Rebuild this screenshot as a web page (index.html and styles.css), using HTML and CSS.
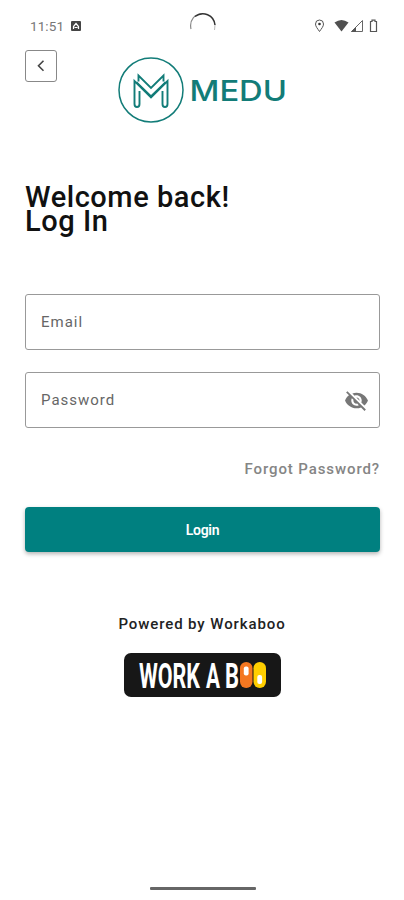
FILE: index.html
```html
<!DOCTYPE html>
<html lang="en">
<head>
  <meta charset="UTF-8" />
  <meta name="viewport" content="width=device-width, initial-scale=1.0" />
  <title>Medu - Log In</title>
  <link rel="stylesheet" href="styles.css">
</head>
<body>
  <div class="status-bar">
    <span class="time">11:51</span>
    <svg class="app-icon" width="10" height="10" viewBox="0 0 10 10">
      <rect width="10" height="10" rx="1" fill="#444" />
      <path d="M2.5 8V5.5L5 2.5L7.5 5.5V8M3.5 6.5H6.5" fill="none" stroke="#fff" stroke-width="1.2" />
    </svg>
    <svg class="camera" width="28" height="24" viewBox="0 0 28 24">
      <path d="M2 17C0 8 6 1.5 14 1.5" fill="none" stroke="#888" stroke-width="1.2" />
      <path d="M6 4.500C14 -1.500 25 3 26 13" fill="none" stroke="#333" stroke-width="1.5" />
      <path d="M26 13L25.5 18" stroke="#bbb" />
    </svg>
    <svg class="system-icons" width="64" height="14" viewBox="0 0 64 14">
      <path d="M5.5 12.5C3.5 9.5 1.5 7.5 1.5 5A4 4 0 0 1 9.5 5C9.5 7.5 7.5 9.5 5.5 12.5Z" fill="none" stroke="#555" />
      <circle cx="5.5" cy="5" r="1.3" fill="#333" />
      <path d="M20.5 3.5Q27.5 -1.5 34.5 3.5L27.5 12.5Z" fill="#505050" />
      <path d="M37.5 12.5H48.5V1.5Z" fill="none" stroke="#666" />
      <path d="M37 13L42 8V13Z" fill="#555" />
      <path d="M56.5 2.5H58V1.2H61V2.5H62.5V12.5H56.5Z" fill="none" stroke="#555" stroke-width="1.2" />
    </svg>
  </div>

  <header>
    <button class="back-btn" aria-label="Back">
      <svg width="30" height="30" viewBox="0 0 30 30">
        <path d="M17.5 9.8L12.5 14.8L17.5 19.8" fill="none" stroke="#444" stroke-width="1.6" />
      </svg>
    </button>
    <svg class="logo" width="170" height="66" viewBox="0 0 170 66">
      <g fill="none" stroke="#127c78">
        <circle cx="33" cy="33" r="32" stroke-width="1.5" />
        <path d="M20.500 24.500V18.500L33 31L45.500 18.500V24.500" stroke-width="1.900" />
        <path d="M21.500 34V47Q21.500 50 19 50Q16.500 50 16.500 47V24L33 40.500L49.500 24V47Q49.500 50 47 50Q44.500 50 44.500 47V34" stroke-width="1.900" />
        <path d="M18.500 25L33 39L47.500 25" stroke-width="1.500" />
      </g>
      <text class="logo-text" x="71.500" y="44" textLength="97.500" lengthAdjust="spacingAndGlyphs">MEDU</text>
    </svg>
  </header>

  <main>
    <h1>Welcome back!<br>Log In</h1>
    <form>
      <div class="field">
        <input type="text" placeholder="Email" />
      </div>
      <div class="field">
        <input type="password" placeholder="Password" />
        <svg width="25" height="25" viewBox="0 0 24 24" fill="#777">
          <path d="M12 7c2.760 0 5 2.240 5 5 0 .65-.13 1.260-.36 1.830l2.920 2.920c1.510-1.260 2.700-2.890 3.430-4.750-1.730-4.390-6-7.500-11-7.500-1.400 0-2.740.25-3.980.7l2.160 2.160C10.740 7.130 11.350 7 12 7zM2 4.270l2.280 2.280.46.46C3.080 8.300 1.780 10.020 1 12c1.730 4.390 6 7.500 11 7.500 1.550 0 3.030-.3 4.380-.84l.42.42L19.730 22 21 20.730 3.270 3 2 4.270zM7.530 9.800l1.550 1.550c-.05.21-.08.43-.08.65 0 1.660 1.340 3 3 3 .22 0 .44-.03.65-.08l1.550 1.550c-.67.33-1.410.53-2.200.53-2.760 0-5-2.240-5-5 0-.79.2-1.530.53-2.200zm4.310-.78l3.150 3.150.02-.16c0-1.660-1.340-3-3-3l-.17.01z" />
        </svg>
      </div>
      <a class="forgot">Forgot Password?</a>
      <button type="button" class="login-btn">Login</button>
    </form>
  </main>

  <footer>
    <p>Powered by Workaboo</p>
    <svg width="158" height="44" viewBox="0 0 158 44">
      <rect x="1" width="157" height="44" rx="7" fill="#171717" />
      <g class="brand-text">
        <text transform="translate(16 34.500) scale(.56 1)" textLength="109" lengthAdjust="spacingAndGlyphs">WORK</text>
        <text transform="translate(83 34.500) scale(.56 1)" textLength="25" lengthAdjust="spacingAndGlyphs">A</text>
        <text transform="translate(102 34.500) scale(.56 1)" textLength="25" lengthAdjust="spacingAndGlyphs">B</text>
      </g>
      <rect x="117" y="9" width="12.500" height="26" rx="6.200" fill="#f47721" />
      <rect x="120.800" y="13.500" width="4.800" height="9" rx="2" fill="#fff" />
      <rect x="130.500" y="9" width="12.500" height="26" rx="6.200" fill="#ffce00" />
      <rect x="134.300" y="22" width="4.800" height="9" rx="2" fill="#fff" />
    </svg>
  </footer>
  <div class="home-bar"></div>
</body>
</html>
```
FILE: styles.css
```css
* {
  box-sizing: border-box;
}
body {
  margin: 0;
  height: 900px;
  display: flex;
  flex-direction: column;
  font-family: Roboto, sans-serif;
  background-color: #fff;
  overflow: hidden;
}
.status-bar {
  display: flex;
  align-items: center;
  height: 50px;
  padding: 2px 26px 0 30px;
}
.time {
  width: 41px;
  font-size: 13.5px;
  letter-spacing: 0.1px;
  color: #777;
}
.camera {
  margin: 0 0 4px 108px;
}
.system-icons {
  margin-left: auto;
}
header {
  display: flex;
  padding-left: 25px;
}
.back-btn {
  width: 32px;
  height: 32px;
  padding: 0;
  border: 1px solid #888;
  border-radius: 3px;
  background: none;
}
.back-btn svg {
  display: block;
}
.logo {
  margin: 7px 0 0 61px;
}
.logo-text {
  font-family: Inter, sans-serif;
  font-size: 29px;
  font-weight: 500;
  fill: #127c78;
}
main {
  padding: 62px 24px 0 25px;
}
h1 {
  margin: 0;
  font-size: 29px;
  font-weight: 500;
  line-height: 24px;
  letter-spacing: 0.55px;
  color: #111;
}
form {
  display: flex;
  flex-direction: column;
  padding-top: 61px;
}
.field {
  display: flex;
  align-items: center;
  height: 56px;
  margin-bottom: 22px;
  padding: 0 10px 0 15px;
  border: 1px solid #999;
  border-radius: 3px;
}
.field input {
  flex: 1;
  min-width: 0;
  padding: 0;
  border: none;
  outline: none;
  background: none;
  font-family: Roboto, sans-serif;
  font-size: 15px;
  letter-spacing: 1px;
}
.field input::placeholder {
  color: #666;
}
.forgot {
  align-self: flex-end;
  margin-top: 9px;
  font-size: 15px;
  font-weight: 500;
  line-height: 20px;
  letter-spacing: 0.9px;
  color: #858585;
}
.login-btn {
  height: 45px;
  margin-top: 28px;
  border: none;
  border-radius: 4px;
  background-color: #008080;
  box-shadow: 0 2px 4px rgba(0,0,0,0.3);
  color: #fff;
  font-family: Roboto, sans-serif;
  font-size: 14px;
  font-weight: 600;
  letter-spacing: -0.3px;
}
footer {
  display: flex;
  flex-direction: column;
  align-items: center;
  padding-top: 62px;
}
footer p {
  margin: 0 0 19px;
  font-size: 15px;
  font-weight: 500;
  line-height: 20px;
  letter-spacing: 0.9px;
  color: #222;
}
.brand-text {
  font-family: Roboto, sans-serif;
  font-size: 35px;
  font-weight: 700;
  fill: #fff;
}
.home-bar {
  width: 106px;
  height: 3px;
  margin: auto auto 10px 150px;
  border-radius: 1px;
  background-color: #666;
}
```
